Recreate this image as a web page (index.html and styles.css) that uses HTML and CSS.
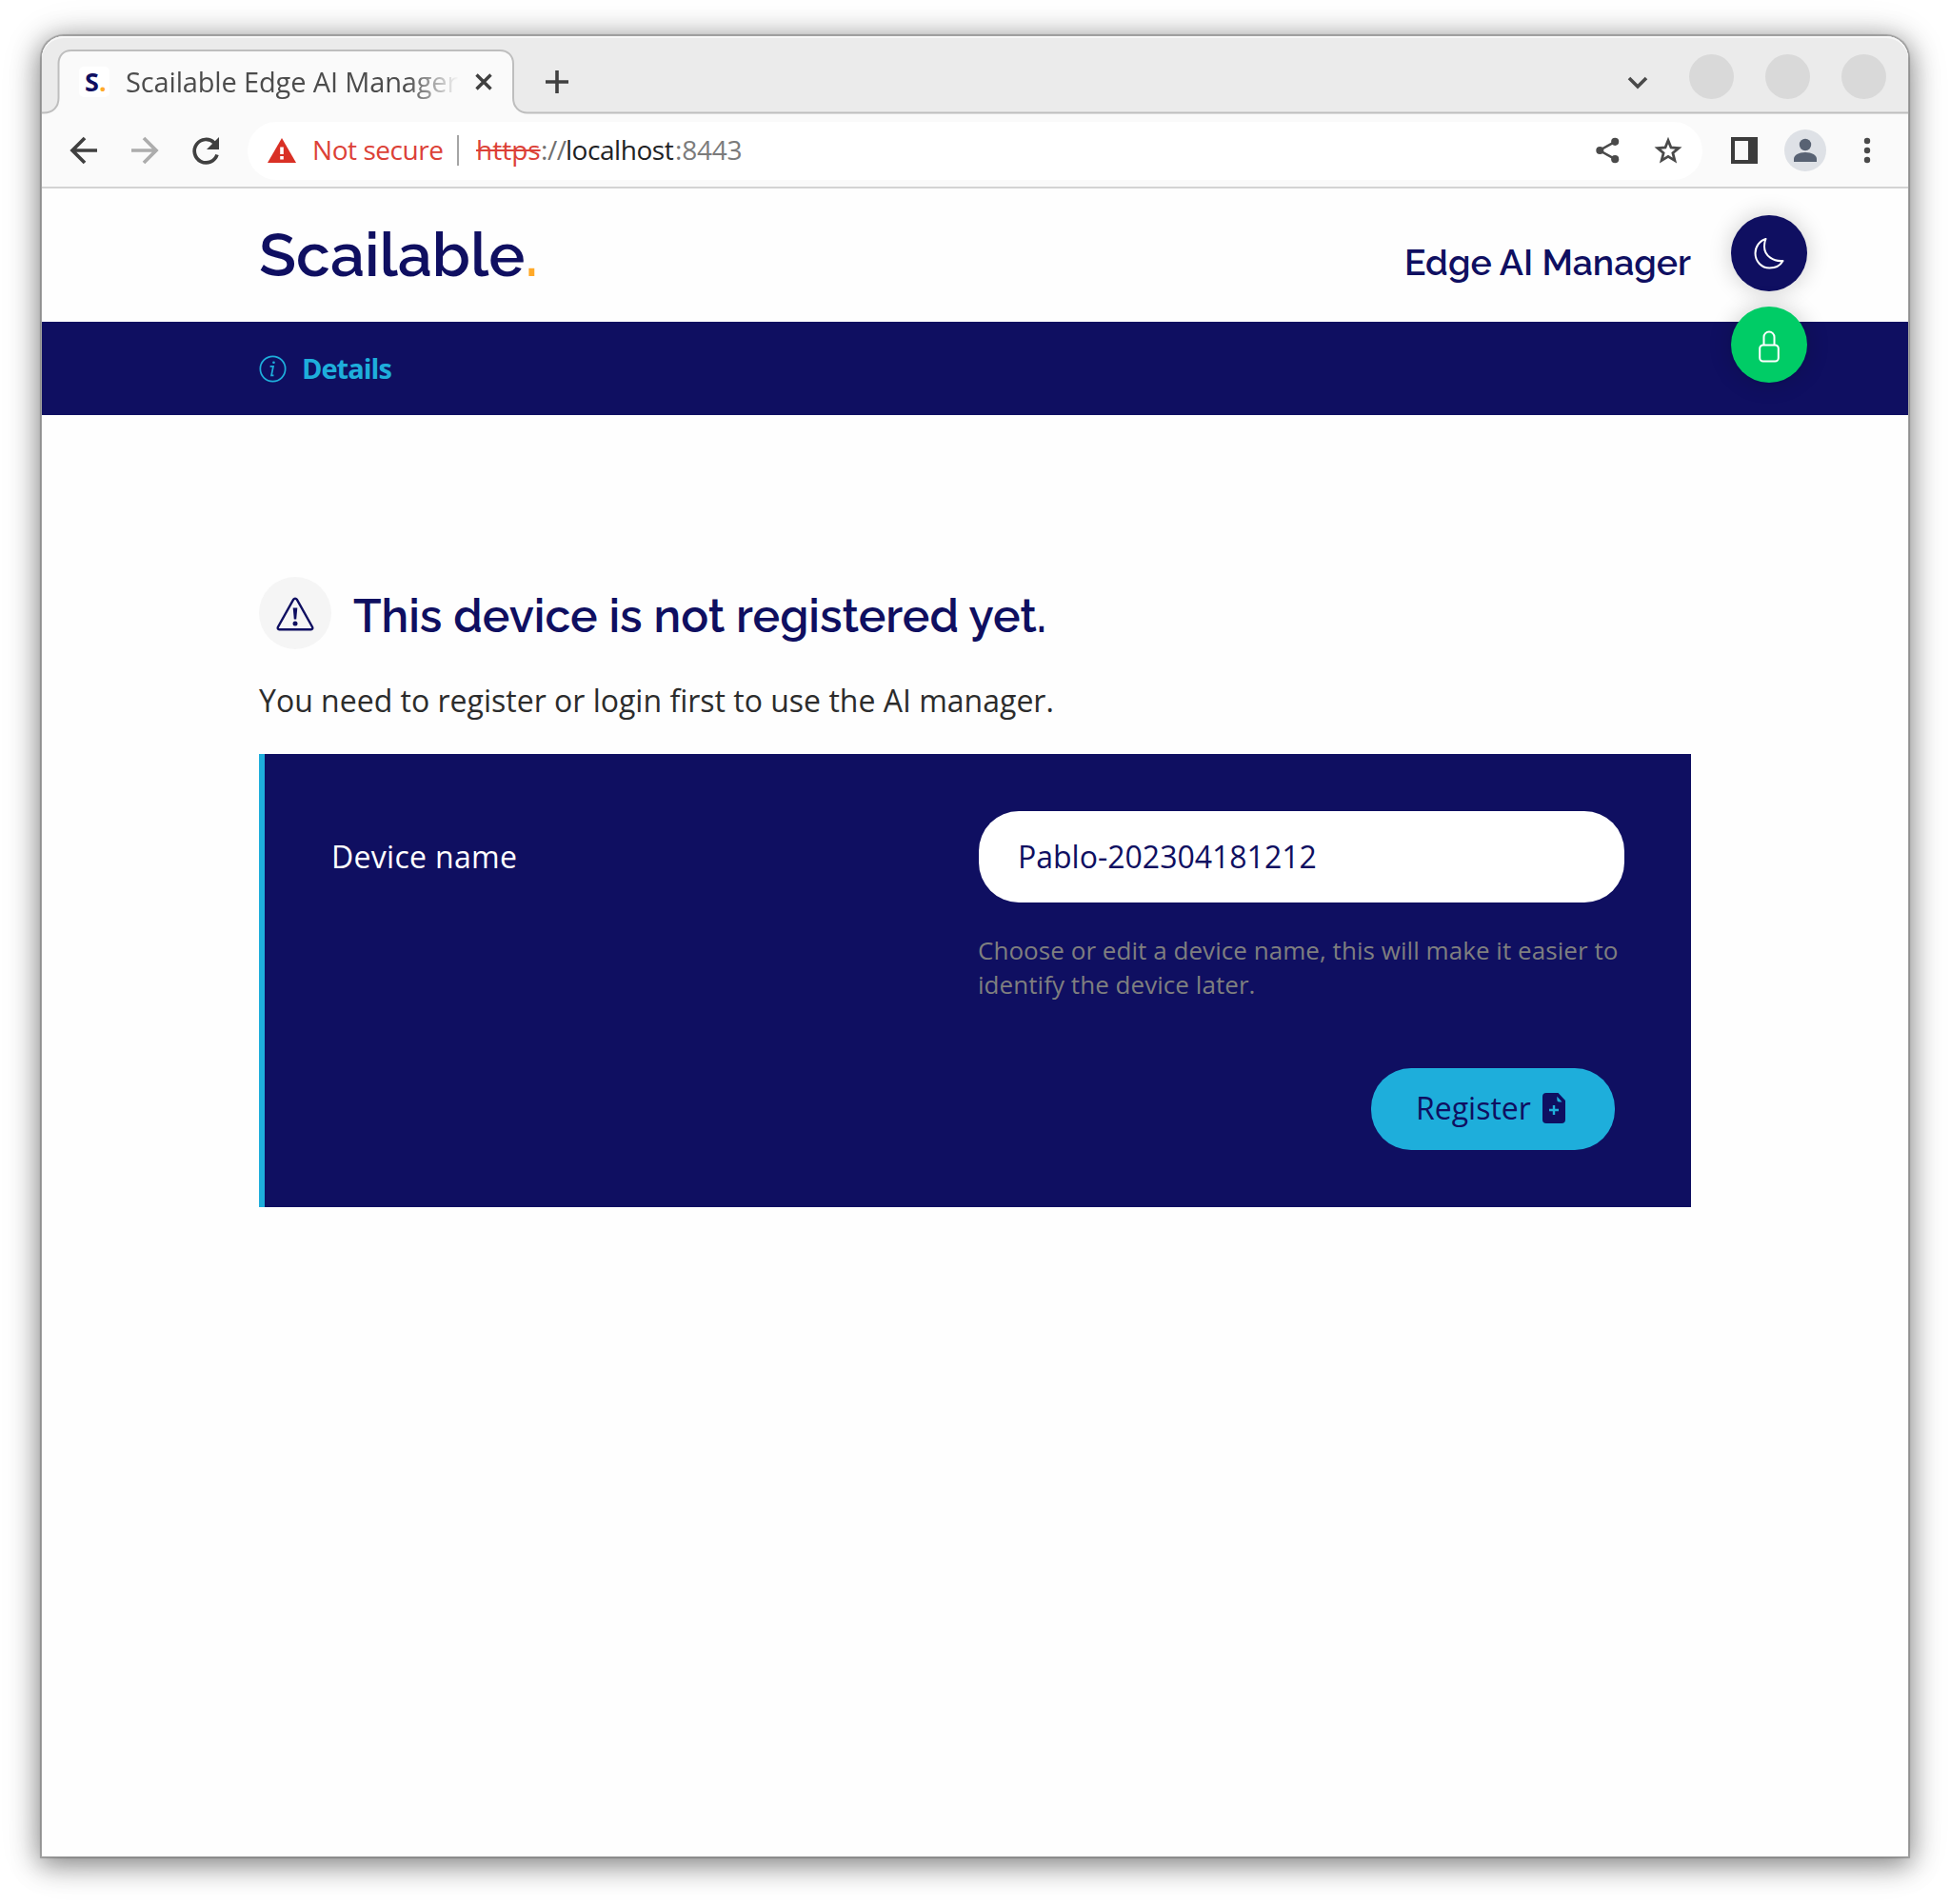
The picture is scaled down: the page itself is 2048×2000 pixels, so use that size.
FILE: index.html
```html
<!DOCTYPE html>
<html lang="en">
<head>
<meta charset="utf-8">
<title>Scailable Edge AI Manager</title>
<link rel="stylesheet" href="styles.css">
</head>
<body>
<div class="window">
  <div class="tabstrip">
    <svg class="tab-shape" viewBox="0 0 1960 82"><path d="M-2 80.500H2C12 80.500 17.500 74 17.500 65V29C17.500 20 23 15 31 15H481C489 15 495 20 495 29V65C495 74 501 80.500 510 80.500H1962V90H-2z"/></svg>
    <div class="tab">
      <span class="favicon">S<span class="dot">.</span></span>
      <span class="tab-title">Scailable Edge AI Manager</span>
      <svg class="tab-close" viewBox="0 0 18 18"><path d="M1.500 1.500l15 15M16.500 1.500l-15 15"/></svg>
    </div>
    <svg class="new-tab" viewBox="0 0 24 24"><path d="M12 0v24M0 12h24"/></svg>
    <svg class="chevron" viewBox="0 0 22 14"><path d="M2 2l9 9 9-9"/></svg>
    <span class="win-btn"></span><span class="win-btn"></span><span class="win-btn"></span>
  </div>

  <div class="toolbar">
    <svg class="tool back" viewBox="0 0 28 28"><path d="M28 14H3M15 1L2 14l13 13"/></svg>
    <svg class="tool forward" viewBox="0 0 28 28"><path d="M0 14h25M13 1l13 13-13 13"/></svg>
    <svg class="tool reload" viewBox="0 0 28 28"><path d="M26 18.500A12.200 12.200 0 1 1 23 6"/><path class="solid" d="M28 0v13H15z"/></svg>
    <div class="omnibox">
      <svg class="warn" viewBox="0 0 30 26"><path d="M15 0l15 26H0z"/><path class="mark" d="M15 9.500v7.500M15 19v3.500"/></svg>
      <span class="insecure">Not secure</span>
      <span class="sep"></span>
      <span class="url"><s>https</s><span class="slashes">://</span><b>localhost</b><span class="port">:8443</span></span>
      <svg class="share" viewBox="0 0 26 28"><path d="M21 4.500L4 14l17 9.500"/><circle cx="21" cy="4.500" r="4.200"/><circle cx="4.500" cy="14" r="4.200"/><circle cx="21" cy="23.500" r="4.200"/></svg>
      <svg class="star" viewBox="0 0 28 28"><path d="M14 3.500l3 7.500 8 .600-6.100 5.200 2 7.800L14 20.400l-6.900 4.200 2-7.800L3 11.600l8-.600z"/></svg>
    </div>
    <svg class="panel-icon" viewBox="0 0 28 28"><path d="M0 0h28v28H0zM4 4v20h14V4z"/></svg>
    <svg class="avatar" viewBox="0 0 44 44"><circle class="disc" cx="22" cy="22" r="22"/><circle cx="22" cy="16" r="6.200"/><path d="M10 34v-3c0-4 5-7 12-7s12 3 12 7v3z"/></svg>
    <svg class="menu" viewBox="0 0 8 28"><circle cx="4" cy="4" r="3.200"/><circle cx="4" cy="14" r="3.200"/><circle cx="4" cy="24" r="3.200"/></svg>
  </div>

  <header class="header">
    <div class="logo">Scailable<span class="dot">.</span></div>
    <div class="product">Edge AI Manager</div>
    <div class="floating">
      <button class="round moon" aria-label="Dark mode"><svg viewBox="0 0 32 34"><path d="M12.500 2C6 4 1.500 10 1.500 17c0 8.500 6.500 15.500 15 15.500 6 0 11.500-3 14-7.500-9.500 1-19.500-5-19.500-15 0-3 .5-5.500 1.500-8z"/></svg></button>
      <button class="round lock" aria-label="Lock"><svg viewBox="0 0 22 34"><rect x="1.200" y="15.500" width="19.600" height="17" rx="3.500"/><path d="M5.500 15.500V7a5.500 5.500 0 0 1 11 0v8.500"/></svg></button>
    </div>
  </header>

  <nav class="nav">
    <svg class="info" viewBox="0 0 30 30"><circle cx="15" cy="15" r="13.600"/><path d="M12 12.300h3.500L13.500 22h2.500"/><circle class="fill" cx="16" cy="8" r="1.400"/></svg>
    <a class="nav-link">Details</a>
  </nav>

  <main class="main">
    <div class="title-row">
      <span class="badge"><svg viewBox="0 0 40 36"><path d="M20 1.700c.8 0 1.400.4 1.800 1l16.300 29c.6 1.300 0 2.500-1.400 2.500H3.300c-1.400 0-2-1.200-1.400-2.500l16.300-29c.4-.600 1-1 1.800-1z"/><path class="bang" d="M17.700 11.500h4.600l-1.100 12h-2.400z"/><circle class="bang" cx="20" cy="28" r="2.500"/></svg></span>
      <h1>This device is not registered yet.</h1>
    </div>
    <p class="lead">You need to register or login first to use the AI manager.</p>
    <form class="card">
      <label class="label" for="name">Device name</label>
      <div class="fields">
        <input id="name" class="input" value="Pablo-202304181212">
        <p class="help">Choose or edit a device name, this will make it easier to identify the device later.</p>
        <button type="button" class="register"><span>Register</span><svg viewBox="0 0 24 32"><path d="M4 0h12.500L24 8v20a4 4 0 0 1-4 4H4a4 4 0 0 1-4-4V4a4 4 0 0 1 4-4z"/><path class="fold" d="M15.300 3.800v3.400a2.200 2.200 0 0 0 2.200 2.200h3"/><path class="plus" d="M12 13v10M7 18h10"/></svg></button>
      </div>
    </form>
  </main>
</div>
</body>
</html>
```
FILE: styles.css
```css
* { box-sizing: border-box; }
body {
  margin: 0;
  height: 2000px;
  padding: 37px 43px 49px;
  background: #fff;
  overflow: hidden;
  font-family: "Open Sans", sans-serif;
}
svg { display: block; flex: none; fill: none; overflow: visible; }
.dot { color: #ffa928; }

.window {
  width: 1962px;
  height: 1914px;
  border: 1px solid #a0a0a0;
  border-radius: 24px 24px 0 0;
  background: #fefefe;
  box-shadow: 0 0 1px 1px rgba(0,0,0,.25), 0 6px 28px 2px rgba(0,0,0,.42), 0 4px 46px rgba(0,0,0,.14);
}

/* Browser chrome */
.tabstrip {
  position: relative;
  display: flex;
  align-items: center;
  height: 82px;
  padding-right: 23px;
  border-radius: 23px 23px 0 0;
  background: #ebebeb;
  box-shadow: inset 0 2px #f7f7f7;
  overflow: hidden;
}
.tab-shape {
  position: absolute;
  inset: 0;
  width: 1960px;
  height: 82px;
  fill: #fafafa;
  stroke: #bebebe;
  stroke-width: 2;
}
.tab {
  position: relative;
  display: flex;
  align-items: center;
  width: 478px;
  margin-left: 17px;
  padding: 13px 0 0 22px;
}
.favicon {
  width: 32px;
  height: 32px;
  border-radius: 5px;
  background: #fff;
  color: #0f0f61;
  font: 700 27px/32px "Open Sans", sans-serif;
  padding-left: 6px;
}
.tab-title {
  flex: none;
  width: 350px;
  margin-left: 17px;
  overflow: hidden;
  white-space: nowrap;
  font-size: 29px;
  line-height: 40px;
  letter-spacing: -.15px;
  font-stretch: 90%;
  color: #4c4c4c;
  -webkit-mask-image: linear-gradient(90deg, #000 295px, transparent 350px);
  mask-image: linear-gradient(90deg, #000 295px, transparent 350px);
}
.tab-close { width: 18px; height: 18px; margin-left: 17px; stroke: #404040; stroke-width: 3.4; }
.new-tab { width: 24px; height: 24px; margin: 14px 0 0 34px; stroke: #404040; stroke-width: 3.6; }
.chevron { width: 22px; height: 14px; margin: 15px 43px 0 auto; stroke: #4a4a4a; stroke-width: 3.6; }
.win-btn { width: 47px; height: 47px; margin: 2px 0 0 0; border-radius: 50%; background: #d9d9d9; }
.win-btn + .win-btn { margin-left: 33px; }

.toolbar {
  display: flex;
  align-items: center;
  height: 78px;
  padding: 1px 39px 1px 30px;
  background: #fafafa;
  border-bottom: 2px solid #d3d3d3;
}
.tool { width: 28px; height: 28px; margin-right: 36px; stroke: #404040; stroke-width: 3.7; }
.tool .solid { fill: #404040; stroke: none; }
.tool.forward { stroke: #acacac; }
.tool.reload { margin-right: 30px; }
.omnibox {
  flex: 1;
  display: flex;
  align-items: center;
  height: 61px;
  padding: 0 22px 0 21px;
  border-radius: 31px;
  background: #fff;
  font-size: 28px;
  line-height: 38px;
  letter-spacing: -.45px;
  font-stretch: 90%;
  white-space: nowrap;
}
.warn { width: 30px; height: 26px; fill: #d93025; }
.warn .mark { stroke: #fff; stroke-width: 3.6; }
.insecure { width: 136px; margin: -2px 0 0 17px; color: #dc4137; }
.sep { width: 2px; height: 32px; margin: 0 18px 0 16px; background: #a5a5a5; }
.url { display: flex; margin-top: -2px; }
.url s { width: 68px; color: #dc4137; letter-spacing: 0; text-decoration-thickness: 2px; }
.slashes { width: 26px; color: #707070; }
.url b { width: 115px; font-weight: 400; color: #202124; }
.port { color: #7b7b7b; letter-spacing: -.2px; }
.share { width: 25px; height: 28px; margin-left: auto; margin-right: 37px; fill: #4a4a4a; stroke: #4a4a4a; stroke-width: 2.6; }
.share path { fill: none; }
.share circle { stroke: none; }
.star { width: 28px; height: 28px; stroke: #4a4a4a; stroke-width: 2.8; }
.panel-icon { width: 28px; height: 28px; margin-left: 30px; fill: #3c3c3c; fill-rule: evenodd; }
.avatar { width: 44px; height: 44px; margin: 0 39px 0 28px; fill: #586273; }
.avatar .disc { fill: #dee1e6; }
.menu { width: 8px; height: 28px; fill: #4a4a4a; }

/* Page header */
.header {
  position: relative;
  display: flex;
  justify-content: space-between;
  height: 140px;
  padding: 0 228px;
  color: #0f0f61;
  font-family: Raleway, Lato, sans-serif;
  white-space: nowrap;
}
.logo { font-size: 64px; font-weight: 600; line-height: 139px; }
.product { font-size: 37.400px; font-weight: 600; line-height: 156px; }
.floating {
  position: absolute;
  top: 28px;
  right: 106px;
  display: flex;
  flex-direction: column;
  gap: 16px;
}
.round {
  display: flex;
  align-items: center;
  justify-content: center;
  width: 80px;
  height: 80px;
  padding: 0;
  border: 0;
  border-radius: 50%;
  box-shadow: 0 0 24px rgba(0,0,0,.2);
}
.round svg { stroke: #fff; stroke-width: 2; stroke-linejoin: round; }
.moon { background: #0f0f61; }
.moon svg { width: 32px; height: 34px; }
.lock { background: #00cc66; }
.lock svg { width: 22px; height: 34px; margin-top: 4px; }

.nav {
  display: flex;
  align-items: center;
  height: 98px;
  padding-left: 228px;
  background: #0f0f61;
}
.info { width: 29px; height: 29px; stroke: #1eaedb; stroke-width: 1.8; }
.info .fill { fill: #1eaedb; stroke: none; }
.nav-link { margin-left: 16px; color: #1eaedb; font-size: 29px; font-weight: 700; line-height: 40px; letter-spacing: -1px; }

/* Registration */
.main { padding: 170px 228px 0; }
.title-row { display: flex; align-items: center; height: 76px; }
.badge {
  display: flex;
  align-items: center;
  justify-content: center;
  width: 76px;
  height: 76px;
  border-radius: 50%;
  background: #f5f5f5;
}
.badge svg { width: 40px; height: 36px; margin-top: 2px; stroke: #0f0f61; stroke-width: 2.4; }
.badge .bang { fill: #0f0f61; stroke: none; }
h1 {
  margin: 5px 0 0 23px;
  color: #0f0f61;
  font: 600 48px/60px Raleway, Lato, sans-serif;
  white-space: nowrap;
}
.lead { margin: 30px 0 0; color: #2c2c2c; font-size: 32px; line-height: 48px; white-space: nowrap; }
.card {
  display: flex;
  justify-content: space-between;
  height: 476px;
  margin-top: 32px;
  padding: 60px 70px;
  border-left: 6px solid #1eaedb;
  background: #0f0f61;
}
.label { color: #fff; font-size: 32px; line-height: 96px; letter-spacing: .3px; }
.fields { display: flex; flex-direction: column; width: 678px; }
.input {
  height: 96px;
  padding: 0 41px 2px;
  border: 0;
  border-radius: 42px;
  background: #fff;
  color: #0f0f61;
  font: 32px/48px "Open Sans", sans-serif;
}
.help { margin: 32px 0 0 -1px; color: #7f7f7f; font-size: 26px; line-height: 36px; letter-spacing: .05px; }
.register {
  display: flex;
  align-items: center;
  align-self: flex-end;
  width: 256px;
  height: 86px;
  margin: 70px 10px 0 0;
  padding: 0 0 2px 47px;
  border: 0;
  border-radius: 42px;
  background: #1eaedb;
  color: #0f0f61;
  font: 32px/48px "Open Sans", sans-serif;
}
.register svg { width: 24px; height: 32px; margin-left: 12px; fill: #0f0f61; }
.register .plus { stroke: #1eaedb; stroke-width: 2.4; }
.register .fold { fill: #1eaedb; }
```
